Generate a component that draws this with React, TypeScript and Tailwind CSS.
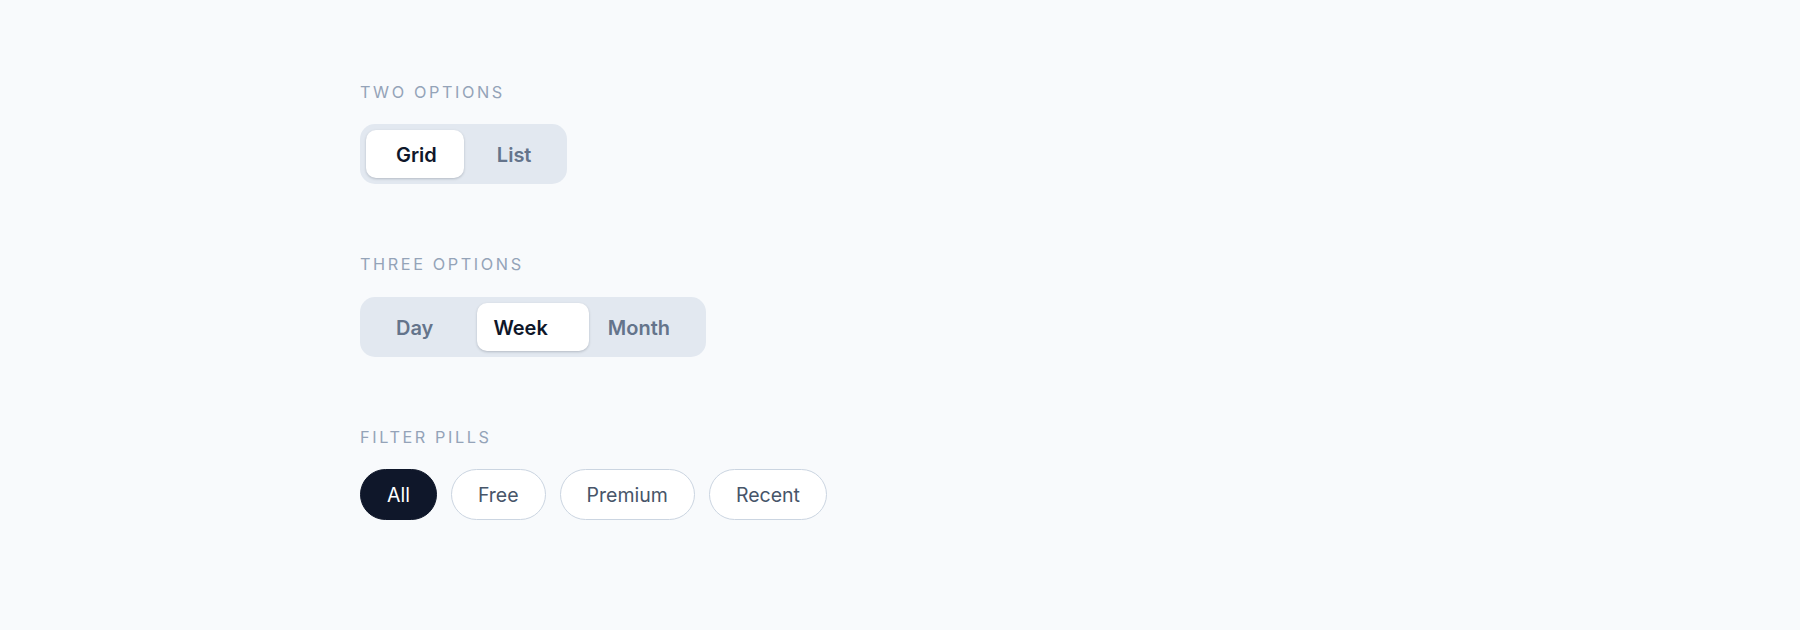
import React, { useState } from "react";

function Segmented({ options, initial }: { options: string[]; initial: number }) {
  const [active, setActive] = useState(initial);
  const n = options.length;
  return (
    <div className="relative inline-flex self-start rounded-[15px] bg-[#e2e8f0] p-[6px]">
      <div
        className="absolute top-[6px] bottom-[6px] rounded-[10px] bg-white shadow-[0_1px_3px_rgba(15,23,42,0.16),0_1px_2px_rgba(15,23,42,0.06)]"
        style={{
          width: `calc((100% - 12px) / ${n})`,
          left: `calc(6px + ${active} * (100% - 12px) / ${n})`,
        }}
      />
      {options.map((o, i) => (
        <button
          key={o}
          onClick={() => setActive(i)}
          className={
            "relative z-10 flex h-[48px] items-center justify-center px-[30px] pt-[2px] text-[20px] font-semibold leading-none " +
            (i === active ? "text-[#0f172a]" : "text-[#64748b]")
          }
        >
          {o}
        </button>
      ))}
    </div>
  );
}

function Label({ children }: { children: React.ReactNode }) {
  return (
    <div className="text-[16.25px] leading-[20px] tracking-[0.16em] text-[#94a3b8] uppercase">
      {children}
    </div>
  );
}

export default function App() {
  const [pill, setPill] = useState(0);
  const pills = ["All", "Free", "Premium", "Recent"];
  return (
    <div
      className="min-h-[630px] w-full bg-[#f8fafc] pl-[360px] pt-[82px]"
      style={{ fontFamily: "Inter, 'Noto Sans', sans-serif" }}
    >
      <div className="flex flex-col">
        <Label>Two options</Label>
        <div className="mt-[22px] flex">
          <Segmented options={["Grid", "List"]} initial={0} />
        </div>

        <div className="mt-[70px]">
          <Label>Three options</Label>
        </div>
        <div className="mt-[23px] flex">
          <Segmented options={["Day", "Week", "Month"]} initial={1} />
        </div>

        <div className="mt-[70px]">
          <Label>Filter pills</Label>
        </div>
        <div className="mt-[22px] flex gap-[14px]">
          {pills.map((p, i) => (
            <button
              key={p}
              onClick={() => setPill(i)}
              className={
                "flex h-[51px] items-center rounded-full border px-[26px] pt-[3px] text-[19.5px] leading-none " +
                (i === pill
                  ? "border-[#0f172a] bg-[#0f172a] text-white"
                  : "border-[#cbd5e1] bg-white text-[#475569]")
              }
            >
              {p}
            </button>
          ))}
        </div>
      </div>
    </div>
  );
}
